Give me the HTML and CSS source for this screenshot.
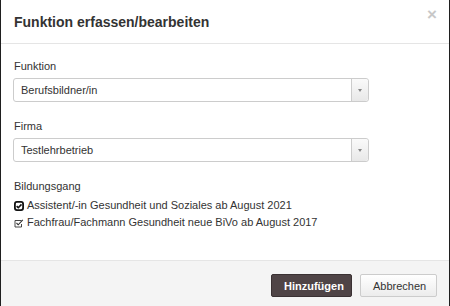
FILE: index.html
```html
<!DOCTYPE html>
<html lang="de">

<head>
    <meta charset="UTF-8">
    <title>Funktion erfassen/bearbeiten</title>
    <link rel="stylesheet" href="styles.css">
</head>

<body>
    <div class="modal">
        <div class="modal-header">
            <h4 class="modal-title">Funktion erfassen/bearbeiten</h4>
            <span class="close">&times;</span>
        </div>

        <div class="modal-body">
            <div class="form-group">
                <label class="form-label">Funktion</label>
                <div class="select-box">
                    <span class="select-value">Berufsbildner/in</span>
                    <span class="select-arrow"></span>
                </div>
            </div>

            <div class="form-group">
                <label class="form-label">Firma</label>
                <div class="select-box">
                    <span class="select-value">Testlehrbetrieb</span>
                    <span class="select-arrow"></span>
                </div>
            </div>

            <div class="form-group">
                <label class="form-label">Bildungsgang</label>
                <div class="check-list">
                    <div class="check-item">
                        <svg class="check-icon" viewBox="0 0 10 10">
                            <rect x="0.9" y="0.9" width="8.2" height="8.2" rx="2" fill="#fff" stroke="#111" stroke-width="1.8" />
                            <path d="M2.6 5.1 L4.3 6.7 L7.5 3.4" fill="none" stroke="#111" stroke-width="1.6" />
                        </svg>
                        <span>Assistent/-in Gesundheit und Soziales ab August 2021</span>
                    </div>
                    <div class="check-item">
                        <svg class="check-icon" viewBox="0 0 10 10">
                            <path d="M7.5 2.5 H1 V9 H7.5 V6" fill="none" stroke="#333" stroke-width="0.9" />
                            <path d="M2.5 5 L4.2 6.8 L8.8 1.8" fill="none" stroke="#333" stroke-width="1.1" />
                        </svg>
                        <span>Fachfrau/Fachmann Gesundheit neue BiVo ab August 2017</span>
                    </div>
                </div>
            </div>
        </div>

        <div class="modal-footer">
            <button class="btn btn-primary">Hinzufügen</button>
            <button class="btn btn-default">Abbrechen</button>
        </div>
    </div>
</body>

</html>
```

FILE: styles.css
```css
body,
html {
    margin: 0;
    padding: 0;
    height: 100%;
    background-color: #1f1f1f;
    font-family: 'Liberation Sans', Arial, sans-serif;
    color: #333;
}

.modal {
    margin: 0 1px;
    height: 100%;
    background-color: white;
    display: flex;
    flex-direction: column;
}

.modal-header {
    height: 44px;
    border-bottom: 1px solid #e5e5e5;
    padding: 0 12px 0 13px;
    display: flex;
    justify-content: space-between;
    box-sizing: border-box;
}

.modal-title {
    margin: 14px 0 0;
    font-size: 14px;
    font-weight: bold;
    color: #333;
}

.close {
    margin-top: 5px;
    font-size: 17px;
    font-weight: bold;
    color: #c8c8c8;
}

.modal-body {
    flex: 1;
    padding: 16px 80px 0 12px;
}

.form-group {
    margin-bottom: 18px;
}

.form-label {
    display: block;
    font-size: 11px;
    line-height: 13px;
    margin: 0 0 5px 1px;
}

.select-box {
    height: 24px;
    border: 1px solid #ccc;
    border-radius: 3px;
    display: flex;
    box-sizing: border-box;
}

.select-value {
    flex: 1;
    font-size: 11px;
    line-height: 22px;
    padding-left: 7px;
}

.select-arrow {
    width: 16px;
    border-left: 1px solid #ccc;
    background: linear-gradient(#fafafa, #e8e8e8);
    border-radius: 0 3px 3px 0;
    position: relative;
}

.select-arrow::after {
    content: "";
    position: absolute;
    left: 6px;
    top: 10px;
    border-left: 2px solid transparent;
    border-right: 2px solid transparent;
    border-top: 3px solid #888;
}

.check-list {
    display: flex;
    flex-direction: column;
    gap: 4px;
    margin-top: 6px;
}

.check-item {
    display: flex;
    align-items: center;
    font-size: 11px;
    line-height: 13px;
    gap: 3px;
}

.check-icon {
    width: 10px;
    height: 10px;
    margin-left: 1px;
}

.modal-footer {
    height: 46px;
    border-top: 1px solid #e5e5e5;
    background-color: #f4f4f4;
    display: flex;
    justify-content: flex-end;
    align-items: flex-start;
    gap: 8px;
    padding: 13px 12px 0 0;
    box-sizing: border-box;
}

.btn {
    height: 23px;
    font-family: inherit;
    font-size: 11px;
    border-radius: 2px;
    padding: 0 12px;
}

.btn-primary {
    width: 81px;
    background-color: #4f4446;
    border: 1px solid #3a3133;
    color: white;
    font-weight: bold;
}

.btn-default {
    width: 77px;
    background: linear-gradient(#fff, #ececec);
    border: 1px solid #ccc;
    color: #333;
}
```
